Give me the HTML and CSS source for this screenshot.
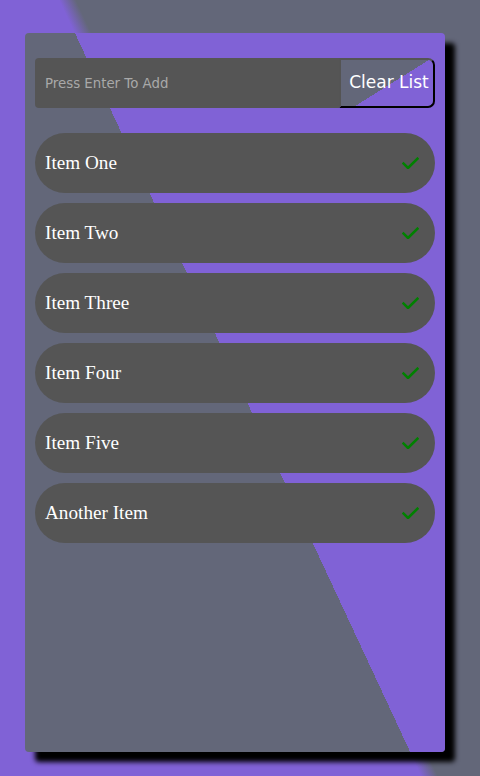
FILE: index.html
```html
<!DOCTYPE html>
<html lang="en">
<head>
<meta charset="utf-8">
<title>Todo List</title>
<link rel="stylesheet" href="styles.css">
</head>
<body>
  <div class="card">
    <form class="add-row">
      <input class="add-input" type="text" placeholder="Press Enter To Add">
      <button class="clear-btn" type="button">Clear List</button>
    </form>
    <ul class="list">
      <li class="item"><span class="item-text">Item One</span><svg class="check" viewBox="0 0 17 12" width="17" height="12"><polyline points="0.6,5.6 6,11 16.4,0.8"/></svg></li>
      <li class="item"><span class="item-text">Item Two</span><svg class="check" viewBox="0 0 17 12" width="17" height="12"><polyline points="0.6,5.6 6,11 16.4,0.8"/></svg></li>
      <li class="item"><span class="item-text">Item Three</span><svg class="check" viewBox="0 0 17 12" width="17" height="12"><polyline points="0.6,5.6 6,11 16.4,0.8"/></svg></li>
      <li class="item"><span class="item-text">Item Four</span><svg class="check" viewBox="0 0 17 12" width="17" height="12"><polyline points="0.6,5.6 6,11 16.4,0.8"/></svg></li>
      <li class="item"><span class="item-text">Item Five</span><svg class="check" viewBox="0 0 17 12" width="17" height="12"><polyline points="0.6,5.6 6,11 16.4,0.8"/></svg></li>
      <li class="item"><span class="item-text">Another Item</span><svg class="check" viewBox="0 0 17 12" width="17" height="12"><polyline points="0.6,5.6 6,11 16.4,0.8"/></svg></li>
    </ul>
  </div>
</body>
</html>
```

FILE: styles.css
```css
html, body {
  margin: 0;
  padding: 0;
}

body {
  width: 480px;
  height: 776px;
  overflow: hidden;
  background: linear-gradient(65deg, #8062d6 50%, #636779 52%);
}

.card {
  box-sizing: border-box;
  width: 420px;
  height: 719px;
  margin: 33px 0 0 25px;
  padding: 25px 10px;
  border-radius: 4px;
  background: linear-gradient(65deg, #636779 51%, #8062d6 51%);
  box-shadow: 10px 10px 5px #000;
}

.add-row {
  display: flex;
  height: 50px;
  margin: 0 0 25px;
}

.add-input {
  flex: 1;
  min-width: 0;
  border: none;
  outline: none;
  background: #555;
  border-radius: 4px 0 0 4px;
  padding: 0 10px;
  font: 13.333px "DejaVu Sans", sans-serif;
  color: #fff;
}

.add-input::placeholder {
  color: #a9a9a9;
}

.clear-btn {
  flex: 0 0 96px;
  box-sizing: border-box;
  border: 2px outset #000;
  border-radius: 0 7px 7px 0;
  background: linear-gradient(148deg, #636779 53%, #8062d6 53%);
  color: #fff;
  font: 17px "DejaVu Sans", sans-serif;
  padding: 0 2px 2px 6px;
  text-align: center;
  white-space: nowrap;
}

.list {
  list-style: none;
  margin: 0;
  padding: 0;
  display: flex;
  flex-direction: column;
  gap: 10px;
}

.item {
  height: 60px;
  border-radius: 30px;
  background: #555;
  display: flex;
  align-items: center;
  justify-content: space-between;
  padding: 0 16px 0 10px;
  font: 19.2px "Liberation Serif", serif;
  color: #fff;
}

.check {
  display: block;
  fill: none;
  stroke: #008000;
  stroke-width: 2.6;
}
```
